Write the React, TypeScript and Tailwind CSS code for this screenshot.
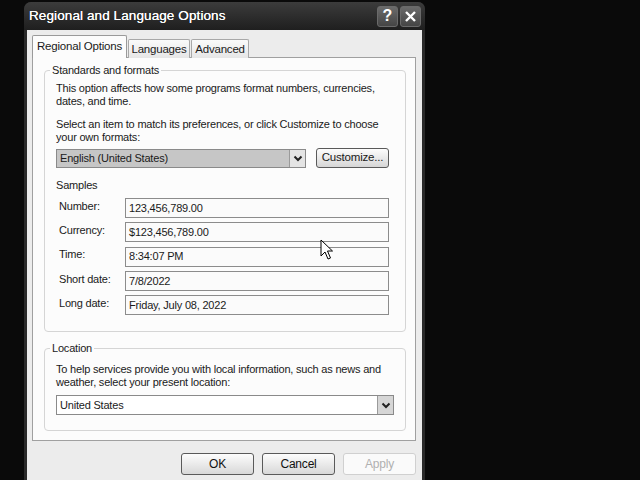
import React from 'react';

const samples = [
  { label: 'Number:', value: '123,456,789.00' },
  { label: 'Currency:', value: '$123,456,789.00' },
  { label: 'Time:', value: '8:34:07 PM' },
  { label: 'Short date:', value: '7/8/2022' },
  { label: 'Long date:', value: 'Friday, July 08, 2022' },
];

const Chevron = () => (
  <svg width="10" height="7" viewBox="0 0 10 7">
    <path d="M1.5 1.5 L5 5 L8.5 1.5" fill="none" stroke="#222" strokeWidth="2" />
  </svg>
);

const DlgButton: React.FC<{ label: string; disabled?: boolean }> = ({ label, disabled }) => (
  <button
    className={
      disabled
        ? 'w-[73px] h-[22px] rounded-[3px] border border-[#d0d0d0] bg-[#fafafa] text-[12px] text-[#b0b0b0]'
        : 'w-[73px] h-[22px] rounded-[3px] border border-[#5a5a5a] bg-gradient-to-b from-[#fdfdfd] to-[#d8d8d8] text-[12px] text-[#111]'
    }
  >
    {label}
  </button>
);

export default function App() {
  return (
    <div className="relative w-[640px] h-[480px] overflow-hidden bg-[#0a0a0a] font-['Liberation_Sans',Arial,sans-serif] text-[#1a1a1a]">
      <div className="ml-[24px] mt-[2px] w-[401px] h-[500px] rounded-t-[7px] bg-[#2a2a2a] px-[3px] flex flex-col">
        {/* title bar */}
        <div className="h-[28px] flex items-center bg-gradient-to-b from-[#3c3c3c] to-[#1f1f1f] -mx-[3px] px-[5px] rounded-t-[7px]">
          <span className="text-white text-[13.5px] tracking-[0.1px] [text-shadow:0_0_0.6px_#fff]">Regional and Language Options</span>
          <div className="ml-auto flex gap-[2px] mr-[-1px]">
            <div className="w-[21px] h-[21px] rounded-[3px] border border-[#6a6a6a] bg-gradient-to-b from-[#6b6b6b] to-[#454545] flex items-center justify-center text-white text-[16px] font-bold leading-none">
              ?
            </div>
            <div className="w-[21px] h-[21px] rounded-[3px] border border-[#6a6a6a] bg-gradient-to-b from-[#6b6b6b] to-[#454545] flex items-center justify-center">
              <svg width="13" height="13" viewBox="0 0 13 13">
                <path d="M2 2 L11 11 M11 2 L2 11" stroke="#fff" strokeWidth="2.4" />
              </svg>
            </div>
          </div>
        </div>

        {/* body */}
        <div className="flex-1 bg-[#ececec] pt-[6px] pl-[5px] pr-[6px] text-[11px] tracking-[-0.2px]">
          {/* tabs */}
          <div className="flex items-end h-[22px]">
            <div className="relative z-10 h-[23px] w-[95px] border border-b-0 border-[#9a9a9a] bg-[#fcfcfc] rounded-t-[2px] flex items-center justify-center text-[11.5px]">
              Regional Options
            </div>
            <div className="ml-[1px] h-[19px] w-[62px] border border-b-0 border-[#a8a8a8] bg-gradient-to-b from-[#fafafa] to-[#e6e6e6] rounded-t-[2px] flex items-center justify-center text-[11.5px] pt-[2px]">
              Languages
            </div>
            <div className="ml-[1px] h-[19px] w-[58px] border border-b-0 border-[#a8a8a8] bg-gradient-to-b from-[#fafafa] to-[#e6e6e6] rounded-t-[2px] flex items-center justify-center text-[11.5px] pt-[2px]">
              Advanced
            </div>
          </div>

          {/* panel */}
          <div className="h-[384px] -mt-[1px] border border-[#a0a0a0] bg-[#fcfcfc] pt-[6px] pl-[11px] pr-[9px]">
            <fieldset className="border border-[#d5d5d5] rounded-[4px] pl-[11px] pr-[15px] pb-[16px]">
              <legend className="-ml-[6px] px-[2px] leading-[13px]">Standards and formats</legend>
              <p className="mt-[5px] leading-[13px]">
                This option affects how some programs format numbers, currencies, dates, and time.
              </p>
              <p className="mt-[10px] leading-[13px]">
                Select an item to match its preferences, or click Customize to choose your own formats:
              </p>
              <div className="mt-[4px] flex items-center">
                <div className="w-[250px] h-[19px] border border-[#8a8a8a] bg-[#c6c6c6] flex items-center">
                  <span className="pl-[3px] flex-1">English (United States)</span>
                  <div className="w-[16px] h-[17px] border-l border-[#9a9a9a] bg-[#e4e4e4] flex items-center justify-center">
                    <Chevron />
                  </div>
                </div>
                <button className="ml-[10px] w-[73px] h-[20px] rounded-[3px] border border-[#5a5a5a] bg-gradient-to-b from-[#fdfdfd] to-[#d6d6d6] text-[11.5px] tracking-[-0.2px]">
                  Customize...
                </button>
              </div>
              <div className="mt-[11px] leading-[13px]">Samples</div>
              <div className="mt-[6px] flex flex-col gap-[4.3px]">
                {samples.map(s => (
                  <div key={s.label} className="flex items-center">
                    <span className="w-[69px] pl-[3px] -mt-[4px]">{s.label}</span>
                    <div className="w-[264px] h-[20px] border border-[#8c8c8c] bg-[#fbfbfb] flex items-center pl-[3px]">
                      {s.value}
                    </div>
                  </div>
                ))}
              </div>
            </fieldset>

            <fieldset className="mt-[10px] border border-[#d5d5d5] rounded-[4px] pl-[11px] pr-[11px] pb-[15px]">
              <legend className="-ml-[6px] px-[2px] leading-[13px]">Location</legend>
              <p className="mt-[8px] leading-[13px]">
                To help services provide you with local information, such as news and weather, select your present location:
              </p>
              <div className="mt-[6px] h-[20px] border border-[#8a8a8a] bg-white flex items-center">
                <span className="pl-[3px] flex-1">United States</span>
                <div className="w-[16px] h-[18px] border-l border-[#9a9a9a] bg-[#d6d6d6] flex items-center justify-center">
                  <Chevron />
                </div>
              </div>
            </fieldset>
          </div>

          {/* buttons */}
          <div className="mt-[12px] flex justify-end gap-[8px]">
            <DlgButton label="OK" />
            <DlgButton label="Cancel" />
            <DlgButton label="Apply" disabled />
          </div>
        </div>
      </div>

      {/* mouse cursor */}
      <svg className="absolute left-[320px] top-[239px]" width="14" height="22" viewBox="0 0 14 22">
        <path d="M1 1 L1 17 L5 13 L8 20 L10.5 19 L7.5 12 L12.5 12 Z" fill="#fff" stroke="#000" strokeWidth="1" />
      </svg>
    </div>
  );
}
